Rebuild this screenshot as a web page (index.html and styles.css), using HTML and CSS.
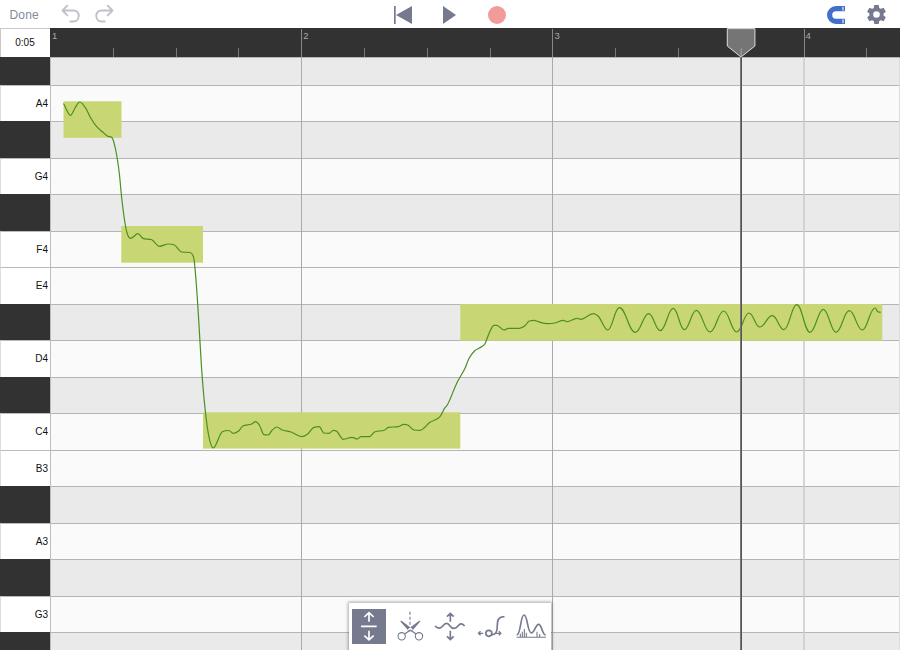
FILE: index.html
```html
<!DOCTYPE html>
<html lang="en">
<head>
<meta charset="utf-8">
<title>Pitch editor</title>
<link rel="stylesheet" href="styles.css">
</head>
<body>
<div class="app">
  <header class="topbar">
    <div class="side left">
      <span class="done">Done</span>
      <svg class="undo" width="20" height="20" viewBox="0 0 20 20"><path d="M6.3 1.7 1.5 6.5l4.8 4.9M1.8 6.5h10.7c7.2 0 6.7 11 0 11H9.3"/></svg>
      <svg class="redo" width="20" height="20" viewBox="0 0 20 20"><path d="M13.7 1.7l4.8 4.8-4.8 4.9M18.2 6.5H7.5c-7.2 0-6.7 11 0 11h3.2"/></svg>
    </div>
    <div class="transport">
      <svg width="18" height="18" viewBox="0 0 18 18"><path d="M0 0h1.7v18H0zM18 0v18L2 9z"/></svg>
      <svg class="play" width="13" height="18" viewBox="0 0 13 18"><path d="M0 0v18L13 9z"/></svg>
      <span class="record"></span>
    </div>
    <div class="side right">
      <svg width="19" height="18" viewBox="0 0 19 18"><path fill="#446fc6" d="M9 0h9v5.2H9a3.8 3.8 0 0 0 0 7.6h9V18H9A9 9 0 0 1 9 0z"/><path stroke="#fff" d="M16 .8v3.8M16 13.4v3.8"/></svg>
      <svg class="gear" width="19" height="19" viewBox="2 2 20 20"><path d="M19.43 12.98c.04-.32.07-.64.07-.98s-.03-.66-.07-.98l2.11-1.65c.19-.15.24-.42.12-.64l-2-3.46c-.12-.22-.39-.3-.61-.22l-2.49 1c-.52-.4-1.08-.73-1.69-.98l-.38-2.65A.49.49 0 0 0 14 2h-4c-.25 0-.46.18-.49.42l-.38 2.65c-.61.25-1.17.59-1.69.98l-2.49-1c-.23-.09-.49 0-.61.22l-2 3.46c-.13.22-.07.49.12.64l2.11 1.65c-.04.32-.07.65-.07.98s.03.66.07.98l-2.11 1.65c-.19.15-.24.42-.12.64l2 3.46c.12.22.39.3.61.22l2.49-1c.52.4 1.08.73 1.69.98l.38 2.65c.03.24.24.42.49.42h4c.25 0 .46-.18.49-.42l.38-2.65c.61-.25 1.17-.59 1.69-.98l2.49 1c.23.09.49 0 .61-.22l2-3.46c.12-.22.07-.49-.12-.64l-2.11-1.65zM12 15.5a3.5 3.5 0 1 1 0-7 3.5 3.5 0 0 1 0 7z"/></svg>
    </div>
  </header>
  <div class="timeline">
    <div class="time">0:05</div>
    <div class="ruler">
      <div class="bar"><span>1</span><i></i><i></i><i></i></div>
      <div class="bar"><span>2</span><i></i><i></i><i></i></div>
      <div class="bar"><span>3</span><i></i><i></i><i></i></div>
      <div class="bar"><span>4</span><i></i><i></i><i></i></div>
    </div>
  </div>
  <main class="roll">
    <div class="keys">
      <div class="key black first"></div>
      <div class="key">A4</div>
      <div class="key black"></div>
      <div class="key">G4</div>
      <div class="key black"></div>
      <div class="key">F4</div>
      <div class="key">E4</div>
      <div class="key black"></div>
      <div class="key">D4</div>
      <div class="key black"></div>
      <div class="key">C4</div>
      <div class="key">B3</div>
      <div class="key black"></div>
      <div class="key">A3</div>
      <div class="key black"></div>
      <div class="key">G3</div>
      <div class="key black"></div>
    </div>
    <div class="lanes">
      <div class="lane dark first"></div>
      <div class="lane"></div>
      <div class="lane dark"></div>
      <div class="lane"></div>
      <div class="lane dark"></div>
      <div class="lane"></div>
      <div class="lane"></div>
      <div class="lane dark"></div>
      <div class="lane"></div>
      <div class="lane dark"></div>
      <div class="lane"></div>
      <div class="lane"></div>
      <div class="lane dark"></div>
      <div class="lane"></div>
      <div class="lane dark"></div>
      <div class="lane"></div>
      <div class="lane dark"></div>
    </div>
  </main>
  <svg class="overlay" width="900" height="650" viewBox="0 0 900 650">
    <path stroke="#aaa" d="M301.5 57V650M552.5 57V650"/>
    <path stroke="#cacaca" stroke-width="1.5" d="M804 57V650"/>
    <path stroke="#ddd" d="M899.5 58V650"/>
    <g fill="#c9d674">
      <rect x="63.5" y="101.3" width="58" height="36.5"/>
      <rect x="121.3" y="226" width="81.7" height="36.7"/>
      <rect x="203" y="412.3" width="257.3" height="36.3"/>
      <rect x="460.3" y="304" width="422" height="36.7"/>
    </g>
    <path id="pitch" fill="none" stroke="#4c8f24" stroke-width="1.2" stroke-linejoin="round"/>
    <path stroke="#777" stroke-width="2" d="M741 57V650"/>
    <path stroke="#555" d="M741.5 57V650"/>
    <path fill="#757575" stroke="#ddd" d="M727.3 28.6h27.6V46L741 57 727.3 46z"/>
    <path stroke="#aaa" d="M741.2 48.5V57"/>
  </svg>
  <nav class="tools">
    <svg class="tool active" viewBox="36 43 102 103"><path d="M87 54v27M73 67l14-13 14 13M63 95h47M87 108v27M73 123l14 13 14-13"/></svg>
    <svg class="tool" viewBox="157.5 43 102 103"><path class="thin" stroke-dasharray="9 6" d="M208.5 51V93"/><path class="fill" d="M179 80l4-2 33 25 1 5-7 3-8-5zM240 80l-4-2-33 25-1 5 7 3 8-5z"/><path class="mid" d="M192 118l18-12M227 118l-18-12"/><circle class="thin" cx="183.5" cy="125" r="11"/><circle class="thin" cx="235.5" cy="125" r="11"/></svg>
    <svg class="tool" viewBox="279 43 102 103"><path d="M285 94c8 9 17 8 24-1s14-9 21 1 17 9 24 0 12-8 20 0M331 57v24M321 66l10-10 10 10M331 108v26M321 125l10 10 10-10"/></svg>
    <svg class="tool" viewBox="400.5 43 102 103"><circle cx="445" cy="116" r="9"/><path d="M453 120c12 1 16-7 17-20l1-16c1-13 8-18 21-18"/><path class="mid" d="M428 116H413M420 110l-6 6 6 6M466 116h16M475 110l6 6-6 6"/></svg>
    <svg class="tool" viewBox="522 43 102 103"><path d="M530 121c13 0 11-60 22-60s10 54 22 54c10 0 12-26 22-26s10 32 21 32"/><path class="thin" d="M530 128h88M541 126v-9M547 126v-15M553 126v-23M559 126v-12M591 126v-15M599 126v-8"/></svg>
  </nav>
</div>
<script src="script.js"></script>
</body>
</html>
```
FILE: styles.css
```css
* { box-sizing: border-box; }
body {
  margin: 0;
  background: #fff;
  font-family: "Liberation Sans", Arial, sans-serif;
}
.app {
  position: relative;
  width: 900px;
  height: 650px;
  overflow: hidden;
  display: flex;
  flex-direction: column;
}
.topbar {
  height: 28px;
  flex: none;
  display: grid;
  grid-template-columns: 394px 1fr 394px;
  align-items: center;
  fill: #757a8e;
}
.topbar svg { display: block; }
.side { display: flex; align-items: center; height: 28px; }
.left { padding-left: 9.5px; }
.left svg { fill: none; stroke: #bfc1cc; stroke-width: 1.9; stroke-linecap: round; stroke-linejoin: round; }
.done { width: 51.5px; font-size: 12px; letter-spacing: .2px; color: #858a9c; padding-top: 2px; }
.redo { margin-left: 13px; }
.transport { display: flex; align-items: center; padding-top: 1px; }
.play { margin-left: 31px; }
.record { width: 18px; height: 18px; border-radius: 50%; background: #f09d99; margin-left: 32px; }
.right { justify-content: flex-end; padding-right: 14px; padding-top: 1px; gap: 21px; fill: #757a8e; }
.timeline { display: flex; height: 29px; flex: none; background: #323232; }
.time {
  width: 50px;
  background: #fff;
  border: 1px solid #c8c8c8;
  border-right: 0;
  border-bottom: 0;
  padding-right: 1px;
  font-size: 10px;
  line-height: 28px;
  text-align: center;
  color: #111;
}
.ruler { display: flex; flex: 1; overflow: hidden; }
.bar {
  flex: none;
  width: 251.2px;
  display: grid;
  grid-template-columns: repeat(4, 1fr);
  align-items: end;
  color: #aaa;
}
.bar span { height: 28px; padding-left: 1px; border-left: 1px solid #888; font-size: 9.5px; line-height: 14px; }
.bar:first-child span { border-left-color: #323232; }
.bar i { height: 9px; border-left: 1px solid #777; }
.roll { flex: 1; display: flex; min-height: 0; overflow: hidden; }
.keys { width: 51px; flex: none; border-right: 1px solid #bdbdbd; }
.key {
  height: 36.5px;
  border-top: 1px solid #bbb;
  border-left: 1px solid #ddd;
  background: #fff;
  text-align: right;
  padding-right: 2px;
  font-size: 10px;
  line-height: 36px;
  color: #111;
}
.key.black { background: #323232; border-color: #323232; }
.key.first, .lane.first { height: 27.5px; }
.lanes { flex: 1; }
.lane { height: 36.5px; border-top: 1px solid #b5b5b5; background: #fafafa; }
.lane.dark { background: #eaeaea; }
.overlay { position: absolute; left: 0; top: 0; }
.tools {
  position: absolute;
  left: 349px;
  top: 603px;
  width: 202px;
  height: 54px;
  padding: 6.3px 3px;
  display: flex;
  gap: 6.5px;
  background: #fff;
  box-shadow: 0 0 3px 1px rgba(0, 0, 0, .32);
}
.tool {
  width: 34px;
  height: 34.3px;
  flex: none;
  fill: none;
  stroke: #757a8e;
  stroke-width: 5;
}
.tool.active { background: #757a8e; stroke: #fff; }
.tool .thin { stroke-width: 3.3; }
.tool .mid { stroke-width: 4; }
.tool .fill { fill: #757a8e; stroke: none; }
```
FILE: script.js
```js
// Pitch samples as x,y pairs, joined by a smooth monotone curve.
const samples = `63.5,103.5 70.5,115.3 75,108 79.7,102 86,108.7 90,116.7 96.7,126.7 102.7,132 107.3,136 111.7,137.3
115.7,150 119.3,173.3 121.7,198 125.3,225 127.7,235 130.7,238.3 138,233.7 143.3,238.7 151.3,239.5 159.3,246.3
168.3,244 174,244.7 181.7,252 190,252.5 193.7,257.7 196,280 198.7,320 201.3,364 203.7,395 208,431.7 213.3,448
222.3,431.7 228.7,430.5 233.3,433.3 239,430.7 242.7,426 251.7,424 255.3,421.7 259.3,425 264,434.7 268.3,435
271.7,430.7 277,427 281.7,429.7 291.7,432.3 301.7,436.7 307.3,434.3 314,427.3 319.3,426.7 323.7,433 329,433.3
333.3,430.3 336.7,431.3 343.3,439.3 352,437.3 357.3,439 361,436.7 369.3,436.7 375,431.7 384.3,430.3 388.3,427.3
398.3,426.7 404,424.3 407.7,425 414,430 420,430.3 430,422.3 440,416.7 445,407.7 447.3,405 450.7,397.7 456.7,383.3
465,368.3 468.7,359 474.7,350.7 479.3,348 485,343.7 489.3,332.7 494,325.3 496.7,325.3 504,330 508.3,328.3
519.3,328.3 525,325.7 529.3,321 534.3,320.3 538.3,321.7 548.3,323.7 555,323 563.3,320.3 567.3,321.7 576.7,318.3
580.7,319.3 593.3,313.7 598.3,316.3 607.7,330 619.3,307.7 635.3,332.3 648.7,313.7 660.3,330.7
673.3,308.3 684.3,329.7 696.3,310.3 710,332 723.7,311 736.7,332 749,313 759.7,327 772.3,315.7 784,329.7
796.7,304.7 810,332.3 823.3,309.3 836,332.3 849.3,310.7 862.3,330 875,308 877.7,311.7 880.7,312.3`;
const pts = samples.split(/\s+/).map(p => p.split(",").map(Number));
const slope = i => (pts[i + 1][1] - pts[i][1]) / (pts[i + 1][0] - pts[i][0]);
const tangent = i => {
  if (i === 0) return slope(0);
  if (i === pts.length - 1) return slope(i - 1);
  const a = slope(i - 1), b = slope(i);
  if (a * b <= 0) return 0;
  return Math.sign(a) * Math.min(Math.abs(a + b) / 2, 2.5 * Math.abs(a), 2.5 * Math.abs(b));
};
let d = "M" + pts[0];
for (let i = 0; i < pts.length - 1; i++) {
  const [x0, y0] = pts[i], [x1, y1] = pts[i + 1];
  // The vibrato section swings fully between peaks, so it gets rounder handles.
  const h = (x1 - x0) * (x0 > 600 ? 0.42 : 0.33);
  d += `C${x0 + h} ${y0 + h * tangent(i)} ${x1 - h} ${y1 - h * tangent(i + 1)} ${x1} ${y1}`;
}
document.getElementById("pitch").setAttribute("d", d);
```
